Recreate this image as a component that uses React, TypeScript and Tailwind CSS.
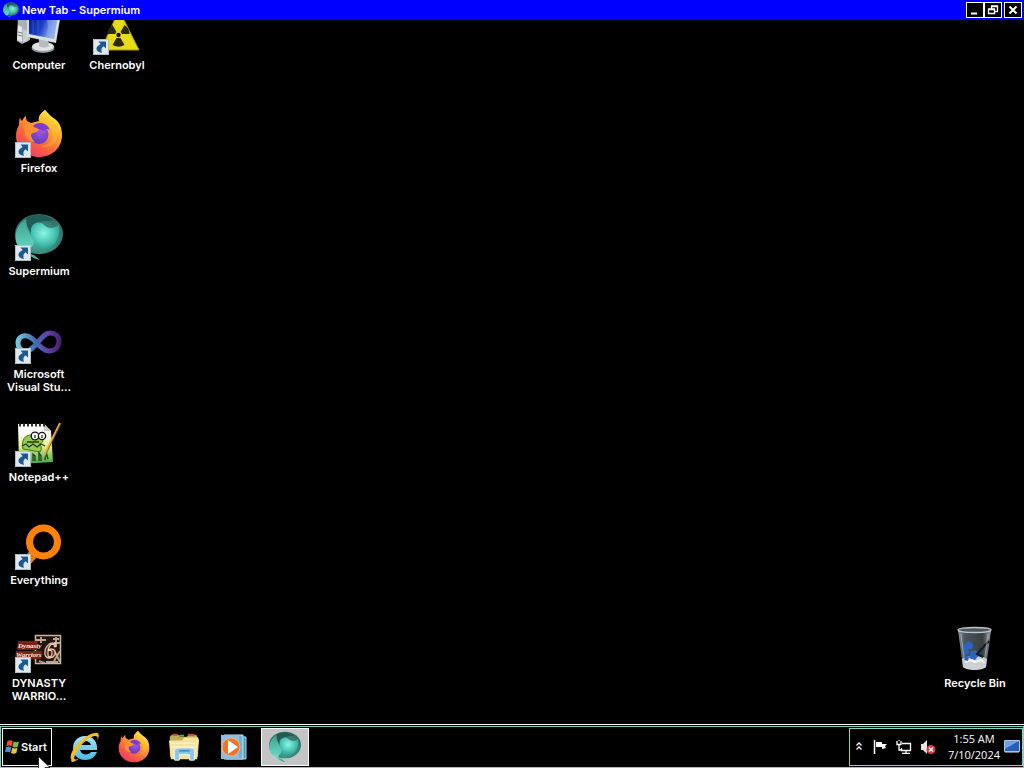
import type { ReactNode } from "react";

function ShortcutArrow() {
  return (
    <svg viewBox="0 0 16 16" className="absolute bottom-0 left-0 h-4 w-4">
      <rect x="0.5" y="0.5" width="15" height="15" fill="#dfe8ef" stroke="#b4bec6" />
      <path d="M5.500 2.500h7.500v7l-2.300-2.200C8.300 8.800 7.800 10.800 9 13.800 5.200 13.600 3.300 11.600 3.500 9.300 3.700 7.400 5.500 6 7.700 4.900z" fill="#1d5791" />
    </svg>
  );
}

function ComputerIcon() {
  return (
    <svg viewBox="0 0 48 48" className="h-full w-full">
      <defs>
        <linearGradient id="pcScreen" x1="0" y1="0" x2="1" y2="0.4">
          <stop offset="0" stopColor="#0a1c8c" />
          <stop offset="0.55" stopColor="#1c3fc8" />
          <stop offset="1" stopColor="#a9c4f2" />
        </linearGradient>
      </defs>
      <path d="M3 8l6-4 6 3v26l-8 4-5-3z" fill="#a9b1b5" />
      <path d="M3 18l4 2v15l-5-2z" fill="#e4e7e8" />
      <path d="M8 22v14l5-2V24z" fill="#c9ced1" />
      <path d="M3 25l4 1M3 28l4 1" stroke="#737b80" />
      <ellipse cx="28" cy="41" rx="11.500" ry="5" fill="#8f989c" />
      <ellipse cx="28" cy="39.500" rx="11" ry="4.500" fill="#dfe3e4" />
      <path d="M24 30l9 2 1 7c-3 2-7 2-10 0z" fill="#b7bec2" />
      <path d="M12 4l34 2-5 30-29-6z" fill="#d7dde1" />
      <path d="M14 6l29 2-4 24-25-5z" fill="url(#pcScreen)" />
      <path d="M30 7l13 1-4 24-8-2c3-8 2-16-1-23z" fill="#86a6ea" opacity="0.6" />
      <path d="M18 8v19M23 8v20" stroke="#4868da" opacity="0.6" />
    </svg>
  );
}

function RadiationIcon() {
  return (
    <svg viewBox="0 0 48 48" className="h-full w-full">
      <path d="M26 3l20 40H8z" fill="#e8dc18" stroke="#a59b08" />
      <circle cx="25.500" cy="28" r="2.200" fill="#14120a" />
      <path d="M23.500 25l-4-7a11 11 0 0 0-5 9h7.500zM27.500 25l4-7a11 11 0 0 1 5 9H29zM23.500 31l-4 7a12 12 0 0 0 12 0l-4-7z" fill="#2b280f" />
    </svg>
  );
}

function FirefoxIcon() {
  return (
    <svg viewBox="0 0 48 48" className="h-full w-full">
      <defs>
        <linearGradient id="ffBody" x1="0.85" y1="0.05" x2="0.25" y2="0.95">
          <stop offset="0" stopColor="#fff04a" />
          <stop offset="0.3" stopColor="#ffb52b" />
          <stop offset="0.6" stopColor="#ff7139" />
          <stop offset="1" stopColor="#f03a60" />
        </linearGradient>
        <radialGradient id="ffGlobe" cx="0.6" cy="0.3" r="0.8">
          <stop offset="0" stopColor="#a455e8" />
          <stop offset="1" stopColor="#5a3ab4" />
        </radialGradient>
      </defs>
      <path d="M30 0c-5 4-7 7-6 11 4 2 9 5 11 10l10-2c0-6-8-11-15-19z" fill="#ffe23c" />
      <path d="M5 7c-1 3-1 5-1 8-2 3-3 7-3 11 0 12 10 21 23 21s23-9 23-22c0-8-3-13-7-16-4-2-7-5-10-9-5 4-7 7-6 11l-8 2-4-2c-1-2-1-3-1-5-2 1-3 3-4 5-1-1-2-2-2-4z" fill="url(#ffBody)" />
      <circle cx="24" cy="24.500" r="9.500" fill="url(#ffGlobe)" />
      <path d="M8 13c3-2 8 1 10 3 3-1 8-3 12 2-4-1-6 1-7 3-2 2-6 1-7 4 0 3 2 5 4 7-6 0-10-4-10-9 0-4-2-6-2-10z" fill="#ff8f2f" />
      <path d="M18 16c4-5 14-4 17 4-3-2-5-1-7 1-3-2-6-2-10-5z" fill="#7a3bd0" />
      <path d="M31 13c6 4 8 9 6 15-2 6-7 8-12 8 11 4 19-4 18-15 0-6-5-9-12-8z" fill="#ffbd35" opacity="0.4" />
    </svg>
  );
}

function SupermiumIcon() {
  return (
    <svg viewBox="0 0 48 48" className="h-full w-full">
      <defs>
        <radialGradient id="smOuter" cx="0.5" cy="0.65" r="0.6">
          <stop offset="0" stopColor="#4fb7a3" />
          <stop offset="0.65" stopColor="#34877a" />
          <stop offset="1" stopColor="#376a64" />
        </radialGradient>
        <radialGradient id="smInner" cx="0.45" cy="0.4" r="0.65">
          <stop offset="0" stopColor="#8df5e4" />
          <stop offset="0.55" stopColor="#4fc9b8" />
          <stop offset="1" stopColor="#2f9485" />
        </radialGradient>
        <linearGradient id="smLeaf" x1="0" y1="0" x2="0" y2="1">
          <stop offset="0" stopColor="#3f9f8e" />
          <stop offset="1" stopColor="#68e0c8" />
        </linearGradient>
      </defs>
      <ellipse cx="24" cy="21" rx="24" ry="20" fill="url(#smOuter)" />
      <path d="M11 6c6-5 19-6 28 2-8-1-13 0-17 3-3 3-4 6-4 11-4-4-7-10-7-16z" fill="#1f5d56" />
      <path d="M16 15c3-6 9-7 13-3 5 4 9 4 15 0 2 13-5 24-15 24-9 0-14-9-13-21z" fill="url(#smInner)" />
      <path d="M11 6C3 11-1 20 1 29c3 7 8 10 13 12-1-6 5-6 5-13-4-7-8-13-8-22z" fill="url(#smLeaf)" />
      <path d="M12 40c4 4 8 6 13 7l-6-5z" fill="#3bb39d" />
    </svg>
  );
}

function VisualStudioIcon() {
  return (
    <svg viewBox="0 0 48 48" className="h-full w-full">
      <defs>
        <linearGradient id="vsLoop" gradientUnits="userSpaceOnUse" x1="2" y1="0" x2="46" y2="0">
          <stop offset="0" stopColor="#79c8dc" />
          <stop offset="0.4" stopColor="#3f6fb4" />
          <stop offset="0.7" stopColor="#6540a8" />
          <stop offset="1" stopColor="#43206f" />
        </linearGradient>
      </defs>
      <path d="M12 35C5 35 3 31 3 27c0-5 4-8 9-7 8 1 13 15 22 15 6 0 10-4 10-10 0-5-4-8-9-8-9 0-14 17-23 18z" fill="none" stroke="url(#vsLoop)" strokeWidth="5" />
    </svg>
  );
}

function NotepadIcon() {
  return (
    <svg viewBox="0 0 48 48" className="h-full w-full">
      <defs>
        <linearGradient id="nppPage" x1="0" y1="0" x2="0" y2="1">
          <stop offset="0.25" stopColor="#fbfcf5" />
          <stop offset="0.55" stopColor="#e7ef8a" />
          <stop offset="1" stopColor="#3fa548" />
        </linearGradient>
      </defs>
      <path d="M3 5h26l7 7 2 31-34 2z" fill="url(#nppPage)" />
      <path d="M29 5v7h7z" fill="#c6ccc4" />
      <path d="M4 6h26" stroke="#333" strokeWidth="3" strokeDasharray="2 2" />
      <path d="M8 30c-2-9 2-14 8-14l4 1c3-3 9-1 8 4 0 3-3 4-4 4 3 3 3 5 1 8z" fill="#9cc94c" stroke="#3d7426" strokeWidth="1" />
      <circle cx="20" cy="17" r="3.800" fill="#fff" stroke="#111" strokeWidth="1.300" />
      <circle cx="27" cy="17" r="3.600" fill="#fff" stroke="#111" strokeWidth="1.300" />
      <path d="M20 16v3M27 16v3M7 27l4-2 3 3 4-3 4 3 4-3 4 2M12 23h12M18 42v-7l2 2v5M24 42v-8l2 3v5M30 41l1-8 2 7" fill="none" stroke="#163b16" strokeWidth="1.300" />
      <path d="M46 4L32 33l-2 5v-6L44 4z" fill="#f0b73a" />
      <path d="M46 4L31 35" stroke="#8d5a1b" />
    </svg>
  );
}

function EverythingIcon() {
  return (
    <svg viewBox="0 0 48 48" className="h-full w-full">
      <path d="M16 27l7 7-10 11-6-6z" fill="#e87a08" />
      <circle cx="28.500" cy="20" r="14" fill="none" stroke="#ff8207" strokeWidth="7" />
    </svg>
  );
}

function DynastyIcon() {
  return (
    <svg viewBox="0 0 48 48" className="h-full w-full">
      <rect x="20.500" y="10.500" width="25" height="28" fill="#24130e" stroke="#c9b5a5" strokeWidth="1.500" />
      <path d="M21 15h10M26 12v6M38 14h6M41 12v10M39 18h6M24 36l6 2M40 27l5 10M45 26l-6 10M31 37h12" fill="none" stroke="#bda793" strokeWidth="1.800" />
      <path d="M3 16h20l-1 9H2zM1 26h26l-1 8H0z" fill="#7d2015" />
      <g fontFamily="Liberation Serif, serif" fontStyle="italic" fontWeight="700">
        <text x="3" y="23" fontSize="7" fill="#fff3e8">Dynasty</text>
        <text x="1" y="32" fontSize="7" fill="#ffe2d4">Warriors</text>
        <text x="29" y="33" fontSize="24" fill="#6e2114" stroke="#f4dfc8" strokeWidth="1">6</text>
      </g>
    </svg>
  );
}

function RecycleBinIcon() {
  return (
    <svg viewBox="0 0 48 48" className="h-full w-full">
      <defs>
        <linearGradient id="binGlass" x1="0" y1="0" x2="1" y2="0">
          <stop offset="0" stopColor="#8d979c" />
          <stop offset="0.2" stopColor="#4b555b" />
          <stop offset="0.75" stopColor="#363e43" />
          <stop offset="1" stopColor="#9aa3a8" />
        </linearGradient>
      </defs>
      <path d="M7 5h33l-5 37c-4 4-19 4-23 0z" fill="url(#binGlass)" />
      <path d="M11 34c5-4 20-4 25 0l-1 8c-4 4-19 4-23 0z" fill="#cdd1d3" />
      <path d="M14 37l6-2 4 2 6-2 4 3" stroke="#f8f8f8" strokeWidth="2" fill="none" />
      <path d="M12 21l5-5 5 3-1 5h-4l1 4-5 3zM20 26l5-1 3 5-4 5-6-2zM13 31l5 1-1 4-4-1z" fill="#2865c4" />
      <path d="M38 16L26 29l6 3" fill="none" stroke="#15191c" strokeWidth="2" />
      <ellipse cx="23.500" cy="5" rx="16.500" ry="2.500" fill="#4d565b" stroke="#bfc6ca" strokeWidth="1.300" />
      <path d="M10 9l4 31M37 9l-4 31" stroke="#c3cacd" opacity="0.6" />
    </svg>
  );
}

function ExplorerEIcon() {
  return (
    <svg viewBox="0 0 32 32" className="h-8 w-8">
      <defs>
        <linearGradient id="ieBlue" x1="0" y1="0" x2="0" y2="1">
          <stop offset="0" stopColor="#a2e7fb" />
          <stop offset="1" stopColor="#4bb9e6" />
        </linearGradient>
      </defs>
      <path d="M29 19H12c1 3 3 4.500 6 4.500 2 0 4-1 5-2.500h6c-2 5-6 8-12 8-7 0-12-5-12-12S10 5 17 5c8 0 13 6 12 14zM12 14h11c-1-3-3-4-5.500-4S13 11 12 14z" fill="url(#ieBlue)" fillRule="evenodd" />
      <path d="M5 25c-5 8 1 7 7 2-6 3-8 2-3-7C14 12 21 6 27 5c3 0 3 2 2 5 3-6 2-9-2-8C18 3 7 14 4 21c-2 4-2 8 1 8" fill="#f2bd27" />
    </svg>
  );
}

function FolderIcon() {
  return (
    <svg viewBox="0 0 34 32" className="h-8 w-8">
      <path d="M2 5l2-2h7l2 2h7l2-2h8l2 4v19H2z" fill="#c4a956" />
      <path d="M5 3h5M21 3h7" stroke="#c74632" strokeWidth="2" />
      <path d="M12 4h5" stroke="#65a45b" strokeWidth="2" />
      <path d="M1 9h14l2-3h15l1 3-2 20H3z" fill="#f3e5a0" />
      <path d="M3 12h28M4 16h27" stroke="#fff7cd" />
      <path d="M7 30V20c0-2 2-3 4-3h13c3 0 4 1 4 3v10h-5v-6H12v6z" fill="#8ec4e4" stroke="#e6f5fb" />
      <path d="M12 20h11" stroke="#4f91bd" strokeWidth="2" />
    </svg>
  );
}

function MediaPlayerIcon() {
  return (
    <svg viewBox="0 0 32 32" className="h-8 w-8">
      <path d="M8 5l20 1v22H8z" fill="#4f8fb9" stroke="#a8d5ee" />
      <path d="M6 4h19v24H6z" fill="#75afd2" stroke="#c4e3f2" />
      <path d="M3 4h18v24H3z" fill="#8cbfdf" />
      <circle cx="13" cy="16" r="9" fill="#ed742a" stroke="#f7b27e" />
      <path d="M10 9l10 7-10 7z" fill="#fff" />
    </svg>
  );
}

function WindowsFlag() {
  return (
    <svg viewBox="0 0 16 16" className="h-4 w-4 shrink-0">
      <path d="M2.500 2c2-1 3.500-1 5.300 0L6.600 7.200c-1.700-1-3.400-1-5.400 0z" fill="#e5542c" />
      <path d="M8.600 2.500c2 1 3.500 1 5.400 0L12.800 7.700c-1.700 1-3.400 1-5.400 0z" fill="#7fbb3f" />
      <path d="M1 8.200c2-1 3.500-1 5.300 0L5.200 13.400c-1.700-1-3.400-1-5.200 0z" fill="#4b94dd" />
      <path d="M7.200 8.700c2 1 3.500 1 5.300 0l-1.200 5.200c-1.700 1-3.400 1-5.200 0z" fill="#f4c531" />
    </svg>
  );
}

function DesktopItem({ label, shortcut, children }: { label: ReactNode; shortcut?: boolean; children: ReactNode }) {
  return (
    <button type="button" className="flex h-[90px] w-[78px] flex-col items-center gap-1 text-center">
      <span className="relative h-12 w-12 shrink-0">
        {children}
        {shortcut && <ShortcutArrow />}
      </span>
      <span className="text-[11px] leading-[13px] font-semibold whitespace-nowrap">{label}</span>
    </button>
  );
}

function TitleBar() {
  return (
    <header className="relative z-10 flex h-5 shrink-0 items-center bg-[#0000fe] pr-0.5 pl-[3px]">
      <span className="h-4 w-4"><SupermiumIcon /></span>
      <h1 className="ml-[3px] flex-1 text-[11px] leading-4 font-semibold">New Tab - Supermium</h1>
      <div className="flex">
        <button type="button" aria-label="Minimize" className="h-4 w-[18px] border border-white bg-black">
          <svg viewBox="0 0 16 14" className="h-full w-full"><path d="M4 10.500h6" stroke="#fff" strokeWidth="2" /></svg>
        </button>
        <button type="button" aria-label="Restore" className="h-4 w-[18px] border border-white bg-black">
          <svg viewBox="0 0 16 14" className="h-full w-full">
            <path d="M6.500 6V3.500h6v5H10M6 3h7M3.500 6.500h6v4h-6zM3 6h7" fill="none" stroke="#fff" strokeWidth="1.300" />
          </svg>
        </button>
        <button type="button" aria-label="Close" className="ml-0.5 h-4 w-[18px] border border-white bg-black">
          <svg viewBox="0 0 16 14" className="h-full w-full"><path d="M4.500 3.500l7 7m0-7l-7 7" stroke="#fff" strokeWidth="2" /></svg>
        </button>
      </div>
    </header>
  );
}

function Desktop() {
  return (
    <main className="flex min-h-0 flex-1 justify-between overflow-hidden">
      <div className="-mt-[13px] flex">
        <div className="flex flex-col gap-[13px]">
          <DesktopItem label="Computer"><ComputerIcon /></DesktopItem>
          <DesktopItem label="Firefox" shortcut><FirefoxIcon /></DesktopItem>
          <DesktopItem label="Supermium" shortcut><SupermiumIcon /></DesktopItem>
          <DesktopItem label={<>Microsoft<br />Visual Stu...</>} shortcut><VisualStudioIcon /></DesktopItem>
          <DesktopItem label="Notepad++" shortcut><NotepadIcon /></DesktopItem>
          <DesktopItem label="Everything" shortcut><EverythingIcon /></DesktopItem>
          <DesktopItem label={<>DYNASTY<br />WARRIO...</>} shortcut><DynastyIcon /></DesktopItem>
        </div>
        <DesktopItem label="Chernobyl" shortcut><RadiationIcon /></DesktopItem>
      </div>
      <div className="self-end pr-[10px] pb-[9px]">
        <DesktopItem label="Recycle Bin"><RecycleBinIcon /></DesktopItem>
      </div>
    </main>
  );
}

function Tray() {
  return (
    <div className="flex items-center border border-[#8fcfc4] pr-0.5 pl-1.5">
      <button type="button" aria-label="Show hidden icons" className="mr-2.5">
        <svg viewBox="0 0 6 12" className="h-3 w-1.5">
          <path d="M0.500 4.500L3 2l2.500 2.500M0.500 8.500L3 6l2.500 2.500" fill="none" stroke="#fff" strokeWidth="1.300" />
        </svg>
      </button>
      <button type="button" aria-label="Action Center" className="mr-2">
        <svg viewBox="0 0 16 16" className="h-4 w-4">
          <path d="M2.500 1v14" stroke="#fff" strokeWidth="1.500" />
          <path d="M4 3h6v2h5l-2 2 1 2-4 1V8H4z" fill="#fff" />
        </svg>
      </button>
      <button type="button" aria-label="Network" className="mr-2">
        <svg viewBox="0 0 16 16" className="h-4 w-4">
          <path d="M6 4.500h8.500v7H5.500V9M10 12v2M6 14.300h8" fill="none" stroke="#fff" strokeWidth="1.300" />
          <path d="M1 2v3.500h4V2M3 1v1M3 6v5h3" fill="none" stroke="#fff" strokeWidth="1.300" />
        </svg>
      </button>
      <button type="button" aria-label="Volume muted" className="mr-3">
        <svg viewBox="0 0 16 16" className="h-4 w-4">
          <path d="M1 5h2l4-4v14l-4-4H1z" fill="#e8e8e8" />
          <circle cx="11" cy="10.500" r="4.500" fill="#d83a3f" />
          <path d="M9 8.500l4 4m0-4l-4 4" stroke="#fff" strokeWidth="1.500" />
        </svg>
      </button>
      <div className="text-center font-['Open_Sans',sans-serif] text-[11px] leading-4">
        <div>1:55 AM</div>
        <div>7/10/2024</div>
      </div>
      <button type="button" aria-label="Show desktop" className="ml-1">
        <svg viewBox="0 0 16 14" className="h-[14px] w-4">
          <path d="M0.500 0.500h15v11h-15z" fill="#285eb8" stroke="#a8c6e8" />
          <path d="M1 1h14L1 9z" fill="#6f9fe0" />
          <path d="M1 12.500h14" stroke="#5e7888" />
        </svg>
      </button>
    </div>
  );
}

function Taskbar() {
  return (
    <footer className="shrink-0 border-t border-white bg-black pt-px">
      <div className="flex h-[42px] border border-[#7fd0c0] py-px pl-px">
        <button type="button" className="flex w-[50px] items-center border border-white pl-0.5 text-[11px] leading-4 font-semibold">
          <WindowsFlag />
          Start
        </button>
        <nav className="ml-2 flex flex-1 gap-0.5">
          <button type="button" aria-label="Internet Explorer" className="flex w-12 items-center justify-center"><ExplorerEIcon /></button>
          <button type="button" aria-label="Firefox" className="flex w-12 items-center justify-center">
            <span className="h-8 w-8"><FirefoxIcon /></span>
          </button>
          <button type="button" aria-label="File Explorer" className="flex w-12 items-center justify-center"><FolderIcon /></button>
          <button type="button" aria-label="Media Player" className="flex w-12 items-center justify-center"><MediaPlayerIcon /></button>
          <button type="button" aria-label="Supermium" className="ml-px flex w-12 items-center justify-center border border-white bg-[#c4c4c4]">
            <span className="h-8 w-8"><SupermiumIcon /></span>
          </button>
        </nav>
        <Tray />
      </div>
    </footer>
  );
}

export default function App() {
  return (
    <div className="relative flex h-screen flex-col overflow-hidden bg-black font-[Inter,'Liberation_Sans',sans-serif] text-white">
      <TitleBar />
      <Desktop />
      <Taskbar />
      {/* Mouse pointer */}
      <svg viewBox="0 0 12 19" className="pointer-events-none absolute top-[756px] left-[38px] z-20 h-[19px] w-3">
        <path d="M0.500 0.500v16l4-4 3 6 2.500-1-3-6h5z" fill="#fff" stroke="#111" strokeWidth="0.800" />
      </svg>
    </div>
  );
}
